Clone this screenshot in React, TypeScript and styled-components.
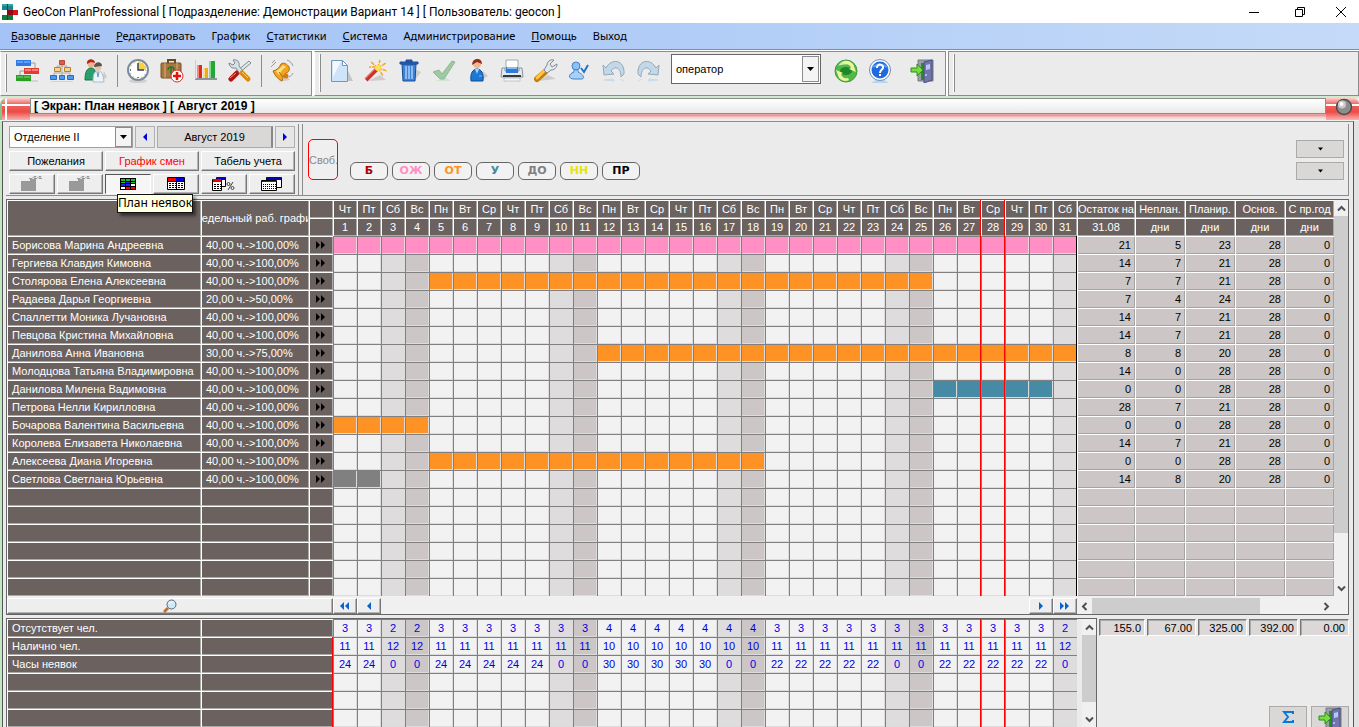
import React from "react";
import styled, { createGlobalStyle, css } from "styled-components";

const C = {
  face: "#ebebeb",
  dark: "#6b6260",
  line: "#8c8c8c",
  frame: "#666666",
  light: "#f2f2f2",
  sat: "#dfdcde",
  sun: "#ccc7c6",
  pink: "#ff8fc5",
  orange: "#ff9224",
  teal: "#458ba5",
  gray: "#808080",
  blue: "#0000e6",
  red: "#ff0000",
};
const UI = `Roboto, "Open Sans", sans-serif`;
const GRID = `"Liberation Sans", Arial, sans-serif`;

const Global = createGlobalStyle`
  * { box-sizing: border-box; }
  body { margin: 0; background: ${C.face}; font: 11px/14px ${GRID}; color: #000; }
  button, select, input { font: inherit; color: inherit; margin: 0; padding: 0; border-radius: 0; }
  button { cursor: default; }
  svg { display: block; flex: none; }
`;

const Page_ = styled.div`
  display: flex;
  flex-direction: column;
  height: 100vh;
  min-width: 1200px;
  overflow: hidden;
`;

/* ---------- window title and menu ---------- */
const TitleBar = styled.header`
  display: flex;
  align-items: center;
  gap: 5px;
  height: 23px;
  flex: none;
  padding-left: 2px;
  background: #fff;
  h1 { flex: 1; margin: 0; font: 400 12px/16px ${UI}; }
`;
const CaptionButtons = styled.div`
  display: flex;
`;
const CaptionButton = styled.button`
  display: grid;
  place-items: center;
  width: 46px;
  height: 23px;
  border: 0;
  background: none;
  &:last-child { width: 36px; }
`;
const MenuBar = styled.nav`
  display: flex;
  align-items: center;
  gap: 16px;
  height: 27px;
  flex: none;
  padding: 0 11px;
  border-bottom: 1px solid ${C.line};
  background: linear-gradient(90deg, #a4c3f6, #b1cdf7 50%, #c5daf8);
`;
const MenuItem = styled.a`
  font: 11px/16px "Noto Sans", "Open Sans", sans-serif;
  color: #000;
  text-decoration: none;
`;

/* ---------- toolbar ---------- */
const ToolBar = styled.div`
  display: flex;
  gap: 2px;
  height: 46px;
  flex: none;
  padding-top: 1px;
  background: #fff;
`;
const Segment = styled.div<{ $grow?: boolean; $tight?: boolean }>`
  display: flex;
  align-items: center;
  flex: ${(p) => (p.$grow ? 1 : "none")};
  padding: 0 ${(p) => (p.$tight ? 6 : 12)}px 5px 4px;
  border: 1px solid ${C.line};
  border-left-color: ${(p) => (p.$grow ? C.line : "#fff")};
  background: ${C.face};
`;
const Grip = styled.i`
  width: 2px;
  height: 38px;
  margin: 2px 4px 0 0;
  align-self: flex-start;
  border-right: 1px solid ${C.line};
  border-left: 1px solid #fff;
`;
const ToolButton = styled.button<{ $gap?: boolean }>`
  display: grid;
  place-items: center;
  width: 34px;
  height: 34px;
  margin-left: ${(p) => (p.$gap ? 8 : 0)}px;
  border: 0;
  background: none;
`;
const ToolSep = styled.i`
  width: 8px;
  height: 32px;
  background: linear-gradient(${C.line}, ${C.line}) 4px 0 / 1px 100% no-repeat;
`;
const Combo = styled.div<{ $big?: boolean }>`
  display: flex;
  background: #fff;
  select {
    flex: 1;
    min-width: 0;
    border: 0;
    background: none;
    appearance: none;
    outline: 0;
  }
  ${(p) =>
    p.$big
      ? css`
          width: 150px;
          height: 30px;
          align-self: flex-start;
          margin: 2px 8px 0 6px;
          padding: 1px;
          border: 1px solid ${C.frame};
          select { padding-left: 3px; }
        `
      : css`
          width: 124px;
          height: 22px;
          border: 1px solid #a0a0a0;
          select { padding-left: 4px; }
        `}
`;
const DropMark = styled.span`
  display: grid;
  place-items: center;
  width: 17px;
  border: 1px solid ${C.line};
  background: #f4f4f4;
`;

/* ---------- inner window ---------- */
const ScreenBar = styled.div`
  display: flex;
  align-items: flex-start;
  height: 25px;
  flex: none;
  border-top: 2px solid #cfead0;
  background: linear-gradient(#fbeaea 0 15px, #e58a86 17px, #f6c9c6 19px, #efefef 22px);
`;
const RedEnd = styled.div<{ $left?: boolean }>`
  width: ${(p) => (p.$left ? 30 : 33)}px;
  height: 22px;
  border-left: ${(p) => (p.$left ? "2px solid #86c58a" : "0")};
  border-radius: ${(p) => (p.$left ? "7px 0 0 0" : "0 6px 0 0")};
  background: ${(p) => (p.$left ? "linear-gradient(90deg, transparent 3px, #fff 3px 5px, transparent 5px)," : "")}
    linear-gradient(transparent 6px, #fff 6px 8px, transparent 8px),
    linear-gradient(#fbd0cd, #f06560 6px, #ee4b45 14px, #f6b3b0);
  svg { margin-left: 9px; }
`;
const ScreenTitle = styled.h2`
  flex: 1;
  margin: 0;
  height: 16px;
  padding-left: 3px;
  border: 1px solid ${C.line};
  background: linear-gradient(#fff, #e9e9e9);
  font: 700 12px/15px ${GRID};
`;
const Shell = styled.main`
  display: flex;
  flex: 1;
  min-height: 0;
  border-left: 2px solid #bfe8c2;
  border-right: 5px solid #e2e2e2;
`;
const Work = styled.div`
  flex: 1;
  min-width: 0;
  display: flex;
  flex-direction: column;
  gap: 3px;
  padding: 2px 4px 0 3px;
  border: 1px solid #555;
  border-top-color: ${C.line};
  border-bottom: 0;
  background: ${C.face};
`;

/* ---------- filter panel ---------- */
const Filters = styled.section`
  display: flex;
  height: 72px;
  flex: none;
  border-right: 1px solid ${C.line};
  border-bottom: 1px solid ${C.line};
`;
const FilterBox = styled.div`
  display: flex;
  flex-direction: column;
  gap: 3px;
  width: 293px;
  padding: 2px 3px 0;
  border-right: 1px solid ${C.line};
`;
const Line = styled.div`
  display: flex;
  gap: 2px;
`;
const raised = css`
  border: 1px solid;
  border-color: #fff #777 #777 #fff;
  box-shadow: inset -1px -1px #b4b4b4;
  background: #eeeeee;
`;
const Step = styled.button`
  display: grid;
  place-items: center;
  width: 20px;
  height: 22px;
  border: 1px solid #b0b0b0;
  background: #e6e6e6;
`;
const Period = styled.output`
  flex: 1;
  height: 22px;
  border: 1px solid #aaa;
  border-right: 2px solid #888;
  background: #dad8d7;
  line-height: 20px;
  text-align: center;
`;
const PushButton = styled.button<{ $red?: boolean }>`
  ${raised}
  flex: 1;
  height: 20px;
  color: ${(p) => (p.$red ? C.red : "#000")};
`;
const IconCell = styled.div`
  position: relative;
  flex: 1;
  display: flex;
`;
const IconButton = styled.button<{ $on?: boolean }>`
  ${raised}
  display: grid;
  place-items: center;
  flex: 1;
  height: 20px;
  ${(p) =>
    p.$on &&
    css`
      border-color: #555 #fff #fff #555;
      box-shadow: none;
      background: #f6f6f6;
    `}
`;
const Tip = styled.span`
  position: absolute;
  z-index: 2;
  left: 12px;
  top: 20px;
  padding: 0 0 1px;
  border: 1px solid #111;
  background: #ffffe1;
  box-shadow: 3px 3px 3px rgba(0, 0, 0, 0.5);
  font: 12px/16px "Noto Sans", sans-serif;
  white-space: nowrap;
`;
const Codes = styled.div`
  flex: 1;
  display: flex;
  align-items: flex-end;
  gap: 4px;
  margin-left: 3px;
  padding: 0 4px 15px 5px;
  border-left: 1px solid ${C.line};
`;
const FreeCode = styled.button`
  width: 30px;
  height: 41px;
  margin-right: 8px;
  overflow: hidden;
  border: 1px solid ${C.red};
  border-radius: 5px;
  background: #efefef;
  color: #888;
  white-space: nowrap;
`;
const Code = styled.button<{ $c: string }>`
  width: 38px;
  height: 18px;
  border: 1px solid ${C.frame};
  border-radius: 6px;
  background: ${C.light};
  color: ${(p) => p.$c};
  font: 700 11px/14px "DejaVu Sans", sans-serif;
`;
const DropStack = styled.div`
  display: flex;
  flex-direction: column;
  gap: 4px;
  margin-left: auto;
`;
const DropButton = styled.button`
  display: grid;
  place-items: center;
  width: 48px;
  height: 18px;
  border: 1px solid #aaa;
  background: #dad8d7;
`;

/* ---------- schedule grid ---------- */
const GridFrame = styled.section`
  display: flex;
  flex: none;
  border: 1px solid ${C.frame};
`;
const GridMain = styled.div`
  flex: 1;
  min-width: 0;
`;
const Table = styled.table`
  width: 100%;
  table-layout: fixed;
  border-collapse: separate;
  border-spacing: 0;
  th, td {
    height: 18px;
    padding: 0;
    font-weight: 400;
    line-height: 14px;
    white-space: nowrap;
    overflow: hidden;
  }
`;
const Dark = styled.th<{ $left?: boolean; $edge?: string }>`
  background: ${C.dark};
  color: #fff;
  text-align: ${(p) => (p.$left ? "left" : "center")};
  box-shadow: ${(p) => (p.$edge ? `inset -1px 0 ${p.$edge}, ` : "")}inset 1px 1px #fff, inset -1px -1px #aaa;
  && { padding-left: ${(p) => (p.$left ? 5 : 0)}px; }
  svg { margin: 0 auto; }
`;
const Clip = styled.div`
  display: flex;
  justify-content: center;
  overflow: hidden;
  margin: 0 1px;
`;
const Day = styled.td<{ $bg: string; $edge?: string }>`
  background: ${(p) => p.$bg};
  color: ${C.blue};
  text-align: center;
  box-shadow: ${(p) => (p.$edge ? `inset -1px 0 ${p.$edge}, ` : "")}inset 1px 1px ${C.gray}, inset -1px -1px #dcdcdc;
`;
const Num = styled.td`
  background: ${C.sun};
  text-align: right;
  box-shadow: inset 1px 1px #fff, inset -1px -1px #a4a4a4;
  && { padding-right: 4px; }
`;
const Strip = styled.div`
  display: flex;
  height: 18px;
  padding-top: 2px;
  background: #f0f0f0;
`;
const Finder = styled.button`
  ${raised}
  display: grid;
  place-items: center;
  width: 326px;
`;
const NavButton = styled.button`
  ${raised}
  display: grid;
  place-items: center;
  width: 24px;
`;
const Spacer = styled.div`
  flex: 1;
`;
const Bar = styled.div<{ $v?: boolean }>`
  display: flex;
  flex-direction: ${(p) => (p.$v ? "column" : "row")};
  width: ${(p) => (p.$v ? 14 : 257)}px;
  flex: none;
  background: #f0f0f0;
`;
const BarArrow = styled.button`
  display: grid;
  place-items: center;
  flex: none;
  width: 15px;
  height: 16px;
  border: 0;
  background: none;
`;
const Track = styled.div<{ $v?: boolean }>`
  flex: 1;
  min-height: 0;
  i { display: block; background: #cdcdcd; ${(p) => (p.$v ? "width: 100%;" : "height: 100%;")} }
`;

/* ---------- summary ---------- */
const Summary = styled.section`
  display: flex;
  flex: 1;
  min-height: 0;
  overflow: hidden;
`;
const SummaryFrame = styled.div`
  display: flex;
  gap: 5px;
  flex: 1;
  min-width: 0;
  border: 1px solid ${C.frame};
  border-bottom: 0;
`;
const Totals = styled.div`
  display: flex;
  flex-direction: column;
  justify-content: space-between;
  width: 252px;
  padding-left: 2px;
`;
const TotalRow = styled.div`
  display: flex;
  gap: 2px;
  padding-top: 1px;
`;
const Total = styled.input`
  flex: 1;
  min-width: 0;
  height: 17px;
  border: 1px solid;
  border-color: #777 #fff #fff #777;
  box-shadow: inset 1px 1px #aaa;
  background: #dcd8d7;
  text-align: right;
  && { padding-right: 3px; }
  &:first-child { flex: none; width: 46px; }
`;
const Actions = styled.div`
  display: flex;
  justify-content: flex-end;
  gap: 4px;
`;
const ActionButton = styled(DropButton)`
  width: 38px;
  height: 21px;
  border-bottom: 0;
  overflow: hidden;
`;

/* ---------- drawings ---------- */
const S = ({ children, w = 24, h = 24, vb = "0 0 24 24" }: { children: React.ReactNode; w?: number; h?: number; vb?: string }) => (
  <svg width={w} height={h} viewBox={vb} aria-hidden="true" fill="none">{children}</svg>
);
const Logo = () => (
  <S w={16} h={16} vb="0 0 16 16">
    <path d="M0 0h11v6H0z" fill="#17878c" /><path d="M0 1h5M6 1h5" stroke="#4cc6c6" /><path d="M5 6h6v5H5z" fill="#8c0a10" /><path d="M11 6h5v5h-5z" fill="#e01018" />
    <path d="M0 11h11v5H0z" fill="#147a3c" /><path d="M5.500 0v6M5.500 11v5" stroke="#0c4a48" />
  </S>
);
const Gantt = () => (
  <S>
    <path d="M2 21h20v2H4z" fill="#d4d4d4" /><path d="M15 4h4v5M8 12H4v4" stroke="#999" />
    <path d="M0 1h15v6H0z" fill="#2e78e8" /><path d="M1 2h6v2H1zM8 2h6v2H8z" fill="#5d9cf4" />
    <path d="M8 9h15v6H8z" fill="#e23a34" /><path d="M9 10h6v2H9zM16 10h6v2h-6z" fill="#f4817a" />
    <path d="M0 16h15v6H0z" fill="#2d9c25" /><path d="M1 17h6v2H1zM8 17h6v2H8z" fill="#55b84c" />
  </S>
);
const Org = () => (
  <S>
    <path d="M12 6v10M4 16v-2h16v2M7 9V7h10v2" stroke="#aaa" />
    <path d="M9.500 1.500h5v4h-5z" fill="#e4574a" stroke="#b4483d" /><path d="M4.500 8.500h6v4h-6zM14.500 8.500h6v4h-6z" fill="#f7d08a" stroke="#b98328" />
    <path d="M.500 16.500h6v4h-6zM9.500 16.500h5v4h-5zM17.500 16.500h6v4h-6z" fill="#4d98f0" stroke="#2d6ab9" />
    <path d="M1 22h22v1H1z" fill="#d2d2d2" />
  </S>
);
const Medics = () => (
  <S>
    <path d="M18 22l5-4-3-6z" fill="#ccc" />
    <circle cx="7" cy="5" r="3.500" fill="#eeb58c" /><path d="M3 5c-1-6 8-6 8-1L7 3z" fill="#b8241c" />
    <path d="M1 21c0-8 2-12 6-12s5 3 5 12z" fill="#29a06c" stroke="#16744a" />
    <circle cx="14" cy="8" r="3.500" fill="#f1c19c" /><path d="M10 8c0-6 8-6 8-1z" fill="#555" />
    <path d="M9 23c0-7 1-11 5-11s5 3 6 11z" fill="#eef3f8" stroke="#a9bccb" /><path d="M13 13l1 5 1-5" stroke="#6d94c8" />
  </S>
);
const Clock = () => (
  <S>
    <ellipse cx="12" cy="22" rx="9" ry="2" fill="#d0d0d0" />
    <circle cx="12" cy="11" r="10" fill="#fff" stroke="#7f8b96" strokeWidth="2" /><path d="M12 11V3a8 8 0 0 1 8 8z" fill="#fbd23c" />
    <path d="M12 4v7h6M12 18v1M5 11H4" stroke="#28456b" strokeWidth="1.500" /><circle cx="12" cy="11" r="8" stroke="#8da2b8" strokeDasharray="1 3.200" />
  </S>
);
const Case = () => (
  <S>
    <path d="M8 4V1h7v3" stroke="#6b4a26" strokeWidth="2" /><rect x="1" y="4" width="20" height="15" rx="1" fill="#a97842" stroke="#765027" />
    <path d="M5 4v15M17 4v15" stroke="#d9b070" /><path d="M11 8c-3 0-3 3-3 3m3-3c3 0 3 3 3 3m-3-3v7" stroke="#1e7b27" strokeWidth="1.500" />
    <circle cx="17" cy="17" r="6" fill="#fff" stroke="#e12a24" /><path d="M17 13v8M13 17h8" stroke="#e8130c" strokeWidth="2.500" />
  </S>
);
const Chart = () => (
  <S>
    <path d="M1 19h22v2H1z" fill="#8a949d" /><path d="M3 6h5v13H3z" fill="#dd2a22" /><path d="M3 6h2v13H3z" fill="#ff8178" />
    <path d="M9 9h5v10H9z" fill="#f0a91c" /><path d="M9 9h2v10H9z" fill="#ffdc7a" /><path d="M15 2h6v17h-6z" fill="#27a53a" /><path d="M15 2h2v17h-2z" fill="#85db8c" />
    <path d="M1.500 1v19" stroke="#ccc" />
  </S>
);
const Tools = () => (
  <S>
    <path d="M21 2l2 2-6 5-6 5-2-2 6-5z" fill="#e3e8ec" stroke="#7e8992" />
    <path d="M9 14l-6 6" stroke="#b3140f" strokeWidth="5" strokeLinecap="round" /><path d="M8 14l-6 5" stroke="#ff8c84" />
    <path d="M1 4l4 2 2-2-2-3c4-1 7 2 6 6l4 5-3 3-4-6C4 10 1 7 1 4z" fill="#d8dfe5" stroke="#7e8992" />
    <path d="M14 14l6 6" stroke="#dd8a10" strokeWidth="5" strokeLinecap="round" /><path d="M14 13l6 6" stroke="#ffd264" />
  </S>
);
const Bell = () => (
  <S>
    <path d="M8 23l12-2-4-4z" fill="#ccc" />
    <path d="M3 12c4-1 6-3 8-7 3-2 6 0 8 3 1 3 0 5-3 6-2 2-3 4-4 8-4-2-7-5-9-10z" fill="#f1a51c" stroke="#b06c0c" /><path d="M6 12c4-2 5-4 7-6l3 2c-4 2-5 5-7 8z" fill="#ffe08a" />
    <circle cx="16" cy="17" r="2.500" fill="#d57d10" /><path d="M1 8l5-5M2 4l3-3M17 1c3 1 5 3 6 6M19 18c2-1 3-2 4-4" stroke="#999" />
    <path d="M9 13l4 5" stroke="#a9650e" />
  </S>
);
const PageIcon = () => (
  <S>
    <path d="M6 22h17l-5-10z" fill="#c5c5c5" /><path d="M1.500 1.500h11l5 5v16h-16z" fill="#cfe4fb" stroke="#7296bd" /><path d="M3 2h8L3 18z" fill="#f3f9ff" />
    <path d="M12.500 1.500v5h5z" fill="#fff" stroke="#7296bd" />
  </S>
);
const Wand = () => (
  <S>
    <path d="M4 22l18-1-6-5z" fill="#ccc" /><path d="M13 10L2 21" stroke="#c8342c" strokeWidth="4" /><path d="M12 9L1 20" stroke="#f0786c" />
    <path d="M14 9l2-8M14 9l8-5M14 9l9 3M14 9L7 3M14 9l5 8M12 8H5" stroke="#f5a623" strokeWidth="1.500" strokeDasharray="4 1" /><circle cx="14" cy="9" r="3" fill="#ffe14d" />
  </S>
);
const Bin = () => (
  <S>
    <path d="M16 22l7-9-6-3z" fill="#ccc" /><path d="M4 5h14l-1 17H5z" fill="#3d82d8" stroke="#1a4c98" /><path d="M8 7v13M11 7v13M14 7v13" stroke="#a8cdf8" strokeWidth="1.500" />
    <path d="M2 3h18v2H2zM8 1h6v2H8z" fill="#2a65b8" stroke="#1a4c98" />
  </S>
);
const Tick = () => (
  <S><path d="M3 22h16l-5-3z" fill="#cfe3cf" /><path d="M1 13l6-2 3 4L20 2l3 1-11 17H8z" fill="#9fcaa1" stroke="#8fb893" /></S>
);
const PersonIcon = () => (
  <S>
    <path d="M14 22l8-5-5-5z" fill="#ccc" /><circle cx="11" cy="5" r="4" fill="#f0b78d" /><path d="M6 6c0-8 10-8 10-1l-5-2z" fill="#8e2f1c" />
    <path d="M5 22c-1-8 2-12 6-12s7 4 6 12z" fill="#1d78d4" stroke="#0d4c96" /><path d="M9 10l2 5 2-5" fill="#a6d4ff" /><path d="M13 17h3" stroke="#7fbaf5" />
  </S>
);
const Printer = () => (
  <S>
    <path d="M6 1h12v9H6z" fill="#fff" stroke="#9aa" /><path d="M2 9h3v3h14V9h3l1 9H1z" fill="#e5e9ec" stroke="#8a949d" />
    <path d="M6 8h12v6H6z" fill="#2f7cd8" /><path d="M7 8h10v2H7z" fill="#8dbcf2" /><path d="M3 16h18v2H3z" fill="#333b42" /><path d="M4 19h16v3H4z" fill="#f5f5f5" stroke="#c4c4c4" />
  </S>
);
const Wrench = () => (
  <S>
    <path d="M4 22l18-2-8-4z" fill="#ccc" /><path d="M11 13l-8 7" stroke="#c87b08" strokeWidth="6" strokeLinecap="round" /><path d="M10 12l-7 7" stroke="#ffc640" strokeWidth="3" strokeLinecap="round" />
    <path d="M10 11l3-5c0-3 3-6 7-5l-4 4 2 3 5-3c0 4-3 6-6 6l-4 3z" fill="#e3e8ec" stroke="#7f8a94" />
  </S>
);
const UserTick = () => (
  <S>
    <circle cx="8" cy="7" r="4" fill="#8cc1f4" stroke="#3d82c9" /><path d="M6 20c-6 0-6-5 0-7-2-3 6-3 4 0 5 2 8 7 3 7z" fill="#a7d0f7" stroke="#3d82c9" />
    <path d="M13 9l3 4 4-7" stroke="#2673c8" strokeWidth="2" />
  </S>
);
const Undo = ({ flip }: { flip?: boolean }) => (
  <S>
    <g transform={flip ? "matrix(-1 0 0 1 24 0)" : undefined}>
      <path d="M1 6l3 3C9-1 23 0 22 15l-3 3c0-9-6-12-10-6l3 3-10 1z" fill="#c4d7e6" stroke="#8faabd" />
      <path d="M2 21l9-1 1 2zM18 20l4 2" fill="#c9dcea" stroke="#c9dcea" />
    </g>
  </S>
);
const Refresh = () => (
  <S>
    <circle cx="12" cy="12" r="11" fill="#52b846" stroke="#3d9c3a" /><path d="M4 7c4-7 12-7 16 0-5-2-11-2-16 0z" fill="#c5efb6" />
    <ellipse cx="12" cy="12" rx="6" ry="4" fill="#1f8728" />
    <path d="M2 11l3 8c3 3 7 4 10 2l-1-2c-4 1-6-1-7-4l2-1z" fill="#eef3a0" /><path d="M22 13l-3-8c-3-3-7-4-10-2l1 2c4-1 6 1 7 4l-2 1z" fill="#eef3a0" />
  </S>
);
const Help = () => (
  <S>
    <path d="M3 24l5-3h8l5 3z" fill="#b9d4ee" /><circle cx="12" cy="11" r="10.500" fill="#fff" stroke="#6e8fb8" /><circle cx="12" cy="11" r="8.500" fill="#1f6ae0" />
    <path d="M4 9c2-6 14-6 16 0-5-2-10-2-16 0z" fill="#5c9cf2" /><path d="M9 9c0-5 7-4 6 0-1 2-3 2-3 5" stroke="#fff" strokeWidth="2" /><path d="M11 15h2v2h-2z" fill="#fff" />
  </S>
);
const Door = () => (
  <S>
    <path d="M8 1h15v21H8z" fill="#9aa0a6" stroke="#75797e" /><path d="M11 4h8v17h-8z" fill="#2d8c2a" /><path d="M14 3l8-2v20l-8 3z" fill="#7276ae" stroke="#4a4e86" />
    <path d="M16 6l4-1v5l-4 1z" fill="#b5c9ef" /><path d="M16 15v2" stroke="#fff" /><path d="M1 9h6V5l6 6-6 6v-4H1z" fill="#77dd3d" stroke="#2d8c1c" />
  </S>
);
const Caret = ({ s = 7 }: { s?: number }) => <S w={s} h={4} vb="0 0 7 4"><path d="M0 0h7L3.500 4z" fill="#000" /></S>;
const Tri = ({ dir, n = 1, c }: { dir: "l" | "r"; n?: number; c: string }) => (
  <S w={n * 5} h={8} vb={`0 0 ${n * 5} 8`}>
    {Array.from({ length: n }, (_, i) => (
      <path key={i} d={dir === "l" ? `M${i * 5 + 4} 0v8l-4-4z` : `M${i * 5} 0v8l4-4z`} fill={c} />
    ))}
  </S>
);
const Chevron = ({ r }: { r: number }) => (
  <S w={9} h={9} vb="0 0 9 9"><path d="M1 6.500L4.500 3 8 6.500" stroke="#505050" strokeWidth="2" transform={`rotate(${r} 4.500 4.500)`} /></S>
);
const FolderOff = () => (
  <S w={22} h={16} vb="0 0 22 16"><path d="M0 5h9V3h6v12H0z" fill="#999" /><path d="M8 2.500h3l2-2h2l-2 2h3l2-2h2l-2 2h3" stroke="#999" /></S>
);
const GridIcon = () => (
  <S w={16} h={12} vb="0 0 16 12">
    <path d="M0 0h16v12H0z" fill="#000" />
    <path d="M1 1h4v2H1zM6 1h4v2H6zM11 1h4v2h-4zM1 4h4v1H1zM11 4h4v1h-4z" fill="#19c02c" />
    <path d="M6 4h4v1H6zM1 6h4v2H1zM6 6h4v2H6z" fill="#22f" />
    <path d="M11 6h4v2h-4zM1 9h4v2H1z" fill="#fff" /><path d="M6 9h4v2H6zM11 9h4v2h-4z" fill="#f00" />
  </S>
);
const CalPair = () => (
  <S w={18} h={14} vb="0 0 18 14">
    <path d="M.500.500h17v12H.500z" fill="#fff" stroke="#000" /><path d="M1 1h8v3H1z" fill="#e00" /><path d="M9 1h8v3H9z" fill="#00d" /><path d="M9.500 4v9M0 4.500h18" stroke="#000" />
    <path d="M2 6.500h14M2 8.500h14M2 10.500h14" stroke="#000" strokeDasharray="2 1" />
  </S>
);
const CalPct = () => (
  <S w={24} h={14} vb="0 0 24 14">
    <path d="M4.500.500h9v9h-9z" fill="#fff" stroke="#000" /><path d="M5 0h9v3H5z" fill="#00d" /><path d="M.500 2.500h9v11h-9z" fill="#fff" stroke="#000" /><path d="M1 2h8v3H1z" fill="#e00" />
    <path d="M2 7.500h7M2 9.500h7M2 11.500h7" stroke="#000" strokeDasharray="2 1" /><circle cx="16.500" cy="7" r="1.500" stroke="#444" /><circle cx="20.500" cy="11" r="1.500" stroke="#444" /><path d="M21 5l-5 8" stroke="#444" />
  </S>
);
const CalStack = () => (
  <S w={22} h={14} vb="0 0 22 14">
    <path d="M5.500.500h15v10h-15z" fill="#fff" stroke="#000" /><path d="M6 0h14v3H6z" fill="#00b" /><path d="M.500 3.500h15v10H.500z" fill="#fff" stroke="#000" /><path d="M1 4.500h14" stroke="#22c" />
    <path d="M2 7.500h13M2 9.500h13M2 11.500h13" stroke="#000" strokeDasharray="1 1" />
  </S>
);
const Lens = () => (
  <S w={14} h={14} vb="0 0 14 14">
    <path d="M5 9l-4 4" stroke="#c4702c" strokeWidth="3" /><circle cx="8.500" cy="5.500" r="4.500" fill="#cfe9fb" stroke="#56697a" /><path d="M6 5c1-2 2-2 4-2" stroke="#fff" />
  </S>
);
const Ball = () => (
  <S w={18} h={18} vb="0 0 18 18">
    <circle cx="9" cy="9" r="7.500" fill="#8d8d8d" stroke="#4c4c4c" strokeWidth="1.500" /><circle cx="7" cy="6.500" r="4" fill="#c9c9c9" /><circle cx="6.500" cy="6" r="2" fill="#fff" />
  </S>
);

/* ---------- data ---------- */
const WD = ["Пн", "Вт", "Ср", "Чт", "Пт", "Сб", "Вс"];
const DAYS = Array.from({ length: 31 }, (_, i) => ({ n: i + 1, w: (i + 3) % 7 }));
const TODAY = 28;
const dayBg = (w: number) => (w === 5 ? C.sat : w === 6 ? C.sun : C.light);
const nowEdge = (n: number) => (n === TODAY || n === TODAY - 1 ? C.red : undefined);

type Employee = { name: string; load: string; nums: number[]; bar?: [number, number, string] };
const FULL = "40,00 ч.->100,00%";
const PEOPLE: Employee[] = [
  { name: "Борисова Марина Андреевна", load: FULL, nums: [21, 5, 23, 28, 0], bar: [1, 31, C.pink] },
  { name: "Гергиева Клавдия Кимовна", load: FULL, nums: [14, 7, 21, 28, 0] },
  { name: "Столярова Елена Алексеевна", load: FULL, nums: [7, 7, 21, 28, 0], bar: [5, 25, C.orange] },
  { name: "Радаева Дарья Георгиевна", load: "20,00 ч.->50,00%", nums: [7, 4, 24, 28, 0] },
  { name: "Спаллетти Моника Лучановна", load: FULL, nums: [14, 7, 21, 28, 0] },
  { name: "Певцова Кристина Михайловна", load: FULL, nums: [14, 7, 21, 28, 0] },
  { name: "Данилова Анна Ивановна", load: "30,00 ч.->75,00%", nums: [8, 8, 20, 28, 0], bar: [12, 31, C.orange] },
  { name: "Молодцова Татьяна Владимировна", load: FULL, nums: [14, 0, 28, 28, 0] },
  { name: "Данилова Милена Вадимовна", load: FULL, nums: [0, 0, 28, 28, 0], bar: [26, 30, C.teal] },
  { name: "Петрова Нелли Кирилловна", load: FULL, nums: [28, 7, 21, 28, 0] },
  { name: "Бочарова Валентина Васильевна", load: FULL, nums: [0, 0, 28, 28, 0], bar: [1, 4, C.orange] },
  { name: "Королева Елизавета Николаевна", load: FULL, nums: [14, 7, 21, 28, 0] },
  { name: "Алексеева Диана Игоревна", load: FULL, nums: [0, 0, 28, 28, 0], bar: [5, 18, C.orange] },
  { name: "Светлова Светлана Юрьевна", load: FULL, nums: [14, 8, 20, 28, 0], bar: [1, 2, C.gray] },
];
const NUM_HEADS = [["Остаток на", "31.08"], ["Неплан.", "дни"], ["Планир.", "дни"], ["Основ.", "дни"], ["С пр.год", "дни"]];
const NUM_WIDTHS = [58, 50, 50, 50, 49];
const rep = (v: number, n: number) => Array<number>(n).fill(v);
const SUMS: { label: string; v: number[] }[] = [
  { label: "Отсутствует чел.", v: [3, 3, 2, 2, ...rep(3, 7), ...rep(4, 7), ...rep(3, 12), 2] },
  { label: "Налично чел.", v: [11, 11, 12, 12, ...rep(11, 7), ...rep(10, 7), ...rep(11, 12), 12] },
  { label: "Часы неявок", v: [24, 24, 0, 0, ...rep(24, 5), 0, 0, ...rep(30, 5), 0, 0, ...rep(22, 5), 0, 0, ...rep(22, 5), 0] },
  { label: "", v: [] },
  { label: "", v: [] },
  { label: "", v: [] },
];
const MENU = [["Б", "азовые данные"], ["Р", "едактировать"], ["", "График"], ["С", "татистики"], ["С", "истема"], ["", "Администрирование"], ["П", "омощь"], ["", "Выход"]];
const CODES: [string, string][] = [["Б", "#b00000"], ["ОЖ", C.pink], ["ОТ", C.orange], ["У", C.teal], ["ДО", C.gray], ["НН", "#e6e600"], ["ПР", "#000"]];

const TB = ({ label, gap, children }: { label: string; gap?: boolean; children: React.ReactNode }) => (
  <ToolButton type="button" aria-label={label} $gap={gap}>{children}</ToolButton>
);

function Schedule() {
  return (
    <Table>
      <colgroup>
        <col width={194} /><col width={108} /><col width={24} />
        {DAYS.map((d) => <col key={d.n} />)}
        {NUM_WIDTHS.map((w, i) => <col key={i} width={w} />)}
      </colgroup>
      <thead>
        <tr>
          <Dark rowSpan={2} aria-label="Сотрудник" />
          <Dark rowSpan={2}><Clip>Недельный раб. график</Clip></Dark>
          <Dark />
          {DAYS.map((d) => <Dark key={d.n} $edge={nowEdge(d.n)}>{WD[d.w]}</Dark>)}
          {NUM_HEADS.map((h) => <Dark key={h[0]}>{h[0]}</Dark>)}
        </tr>
        <tr>
          <Dark />
          {DAYS.map((d) => <Dark key={d.n} $edge={nowEdge(d.n)}>{d.n}</Dark>)}
          {NUM_HEADS.map((h) => <Dark key={h[0]}>{h[1]}</Dark>)}
        </tr>
      </thead>
      <tbody>
        {Array.from({ length: 20 }, (_, r) => {
          const p = PEOPLE[r];
          return (
            <tr key={r}>
              <Dark $left scope="row">{p?.name}</Dark>
              <Dark as="td" $left>{p?.load}</Dark>
              <Dark as="td">{p && <Tri dir="r" n={2} c="#000" />}</Dark>
              {DAYS.map((d) => (
                <Day
                  key={d.n}
                  $bg={p?.bar && d.n >= p.bar[0] && d.n <= p.bar[1] ? p.bar[2] : dayBg(d.w)}
                  $edge={d.n === 31 ? "#000" : nowEdge(d.n)}
                />
              ))}
              {NUM_WIDTHS.map((_, i) => <Num key={i}>{p?.nums[i]}</Num>)}
            </tr>
          );
        })}
      </tbody>
    </Table>
  );
}

export default function App() {
  return (
    <Page_>
      <Global />
      <TitleBar>
        <Logo />
        <h1>GeoCon PlanProfessional [ Подразделение: Демонстрации Вариант 14 ] [ Пользователь: geocon ]</h1>
        <CaptionButtons>
          <CaptionButton aria-label="Свернуть"><S w={10} h={10} vb="0 0 10 10"><path d="M0 5.500h10" stroke="#000" /></S></CaptionButton>
          <CaptionButton aria-label="Восстановить"><S w={10} h={10} vb="0 0 10 10"><path d="M.500 2.500h7v7h-7zM2.500 2.500v-2h7v7h-2" stroke="#000" /></S></CaptionButton>
          <CaptionButton aria-label="Закрыть"><S w={10} h={10} vb="0 0 10 10"><path d="M0 0l10 10M10 0L0 10" stroke="#000" /></S></CaptionButton>
        </CaptionButtons>
      </TitleBar>
      <MenuBar>
        {MENU.map(([k, t]) => <MenuItem key={k + t} href="#"><u>{k}</u>{t}</MenuItem>)}
      </MenuBar>
      <ToolBar>
        <Segment>
          <Grip />
          <TB label="План"><Gantt /></TB><TB label="Структура"><Org /></TB><TB label="Персонал"><Medics /></TB>
          <ToolSep />
          <TB label="Время"><Clock /></TB><TB label="Неявки"><Case /></TB><TB label="Диаграмма"><Chart /></TB><TB label="Настройки"><Tools /></TB>
          <ToolSep />
          <TB label="Оповещения"><Bell /></TB>
        </Segment>
        <Segment $tight>
          <Grip />
          <TB label="Новый"><PageIcon /></TB><TB label="Мастер"><Wand /></TB><TB label="Удалить"><Bin /></TB><TB label="Применить"><Tick /></TB>
          <TB label="Сотрудник"><PersonIcon /></TB><TB label="Печать"><Printer /></TB><TB label="Параметры"><Wrench /></TB>
          <TB label="Пользователь"><UserTick /></TB><TB label="Отменить"><Undo /></TB><TB label="Вернуть"><Undo flip /></TB>
          <Combo $big>
            <select aria-label="Роль"><option>оператор</option></select>
            <DropMark><Caret /></DropMark>
          </Combo>
          <TB label="Обновить"><Refresh /></TB><TB label="Справка"><Help /></TB><TB label="Выход" gap><Door /></TB>
        </Segment>
        <Segment $grow><Grip /></Segment>
      </ToolBar>
      <ScreenBar>
        <RedEnd $left />
        <ScreenTitle>[ Экран: План неявок ] [ Август 2019 ]</ScreenTitle>
        <RedEnd><Ball /></RedEnd>
      </ScreenBar>
      <Shell>
        <Work>
          <Filters>
            <FilterBox>
              <Line>
                <Combo>
                  <select aria-label="Отделение"><option>Отделение II</option></select>
                  <DropMark><Caret /></DropMark>
                </Combo>
                <Step aria-label="Предыдущий месяц"><Tri dir="l" c={C.blue} /></Step>
                <Period>Август 2019</Period>
                <Step aria-label="Следующий месяц"><Tri dir="r" c={C.blue} /></Step>
              </Line>
              <Line>
                <PushButton>Пожелания</PushButton><PushButton $red>График смен</PushButton><PushButton>Табель учета</PushButton>
              </Line>
              <Line>
                <IconCell><IconButton aria-label="Открыть"><FolderOff /></IconButton></IconCell>
                <IconCell><IconButton aria-label="Сохранить"><FolderOff /></IconButton></IconCell>
                <IconCell><IconButton $on aria-label="План неявок"><GridIcon /></IconButton><Tip role="tooltip">План неявок</Tip></IconCell>
                <IconCell><IconButton aria-label="Календарь"><CalPair /></IconButton></IconCell>
                <IconCell><IconButton aria-label="Проценты"><CalPct /></IconButton></IconCell>
                <IconCell><IconButton aria-label="Месяцы"><CalStack /></IconButton></IconCell>
              </Line>
            </FilterBox>
            <Codes>
              <FreeCode>Своб.</FreeCode>
              {CODES.map(([t, c]) => <Code key={t} $c={c}>{t}</Code>)}
              <DropStack>
                <DropButton aria-label="Список 1"><Caret s={5} /></DropButton>
                <DropButton aria-label="Список 2"><Caret s={5} /></DropButton>
              </DropStack>
            </Codes>
          </Filters>

          <GridFrame>
            <GridMain>
              <Schedule />
              <Strip>
                <Finder aria-label="Поиск"><Lens /></Finder>
                <NavButton aria-label="В начало"><Tri dir="l" n={2} c="#0a64c8" /></NavButton>
                <NavButton aria-label="Назад"><Tri dir="l" c="#0a64c8" /></NavButton>
                <Spacer />
                <NavButton aria-label="Вперед"><Tri dir="r" c="#0a64c8" /></NavButton>
                <NavButton aria-label="В конец"><Tri dir="r" n={2} c="#0a64c8" /></NavButton>
                <Bar>
                  <BarArrow aria-label="Влево"><Chevron r={-90} /></BarArrow>
                  <Track><i style={{ width: "74%" }} /></Track>
                  <BarArrow aria-label="Вправо"><Chevron r={90} /></BarArrow>
                </Bar>
              </Strip>
            </GridMain>
            <Bar $v>
              <BarArrow aria-label="Вверх"><Chevron r={0} /></BarArrow>
              <Track $v><i style={{ height: "87%" }} /></Track>
              <BarArrow aria-label="Вниз"><Chevron r={180} /></BarArrow>
              <Strip as="span" />
            </Bar>
          </GridFrame>

          <Summary>
            <SummaryFrame>
              <GridMain>
                <Table>
                  <colgroup>
                    <col width={194} /><col width={132} />
                    {DAYS.map((d) => <col key={d.n} />)}
                  </colgroup>
                  <tbody>
                    {SUMS.map((s, r) => (
                      <tr key={r}>
                        <Dark $left scope="row">{s.label}</Dark>
                        <Dark as="td" $edge={r > 0 ? C.red : undefined} />
                        {DAYS.map((d, i) => (
                          <Day key={d.n} $bg={dayBg(d.w)} $edge={nowEdge(d.n)}>{s.v[i]}</Day>
                        ))}
                      </tr>
                    ))}
                  </tbody>
                </Table>
              </GridMain>
              <Bar $v>
                <BarArrow aria-label="Вверх"><Chevron r={0} /></BarArrow>
                <Track $v><i style={{ height: "88%" }} /></Track>
                <BarArrow aria-label="Вниз"><Chevron r={180} /></BarArrow>
              </Bar>
            </SummaryFrame>
            <Totals>
              <TotalRow>
                {["155.0", "67.00", "325.00", "392.00", "0.00"].map((t, i) => (
                  <Total key={t} readOnly value={t} aria-label={`Итого: ${NUM_HEADS[i][0]}`} />
                ))}
              </TotalRow>
              <Actions>
                <ActionButton aria-label="Сумма">
                  <S w={12} h={12} vb="0 0 12 12"><path d="M11 3V1H2l4 5-4 5h9V9" stroke="#0a78d8" strokeWidth="2" /></S>
                </ActionButton>
                <ActionButton aria-label="Закрыть экран"><Door /></ActionButton>
              </Actions>
            </Totals>
          </Summary>
        </Work>
      </Shell>
    </Page_>
  );
}
